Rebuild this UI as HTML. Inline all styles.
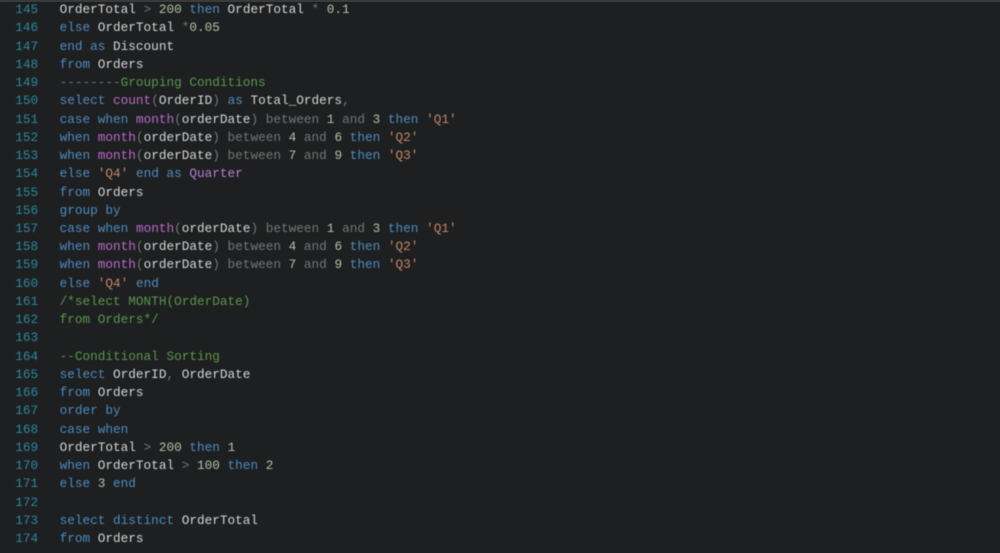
<!DOCTYPE html>
<html><head><meta charset="utf-8"><style>
html,body{margin:0;padding:0;background:#1e1f20;width:1000px;height:553px;overflow:hidden}
#w{position:relative;width:1000px;height:553px}
#top{position:absolute;left:0;top:0;width:1000px;height:2px;background:#3a3a3a}
#t{position:absolute;left:0;top:0;width:1000px;height:553px;filter:blur(.42px)}
pre{position:absolute;margin:0;font:12.72px/18.24px "Liberation Mono",monospace;white-space:pre;top:1.2px}
#n{left:15.2px;color:#2c8a9e}
#c{left:59.6px;color:#d6d6d6}
.k{color:#4e8cc2}.g{color:#767676}.f{color:#bc6ace}.s{color:#c4886c}.d{color:#b2c3a6}.c{color:#5a984e}.v{color:#ba7ed6}
</style></head><body><div id="w"><div id="top"></div><div id="t">
<pre id="n">145
146
147
148
149
150
151
152
153
154
155
156
157
158
159
160
161
162
163
164
165
166
167
168
169
170
171
172
173
174</pre>
<pre id="c">OrderTotal <span class="g">&gt;</span> <span class="d">200</span> <span class="k">then</span> OrderTotal <span class="g">*</span> <span class="d">0.1</span>
<span class="k">else</span> OrderTotal <span class="g">*</span><span class="d">0.05</span>
<span class="k">end as</span> Discount
<span class="k">from</span> Orders
<span class="g">--------</span><span class="c">Grouping Conditions</span>
<span class="k">select</span> <span class="f">count</span><span class="g">(</span>OrderID<span class="g">)</span> <span class="k">as</span> Total_Orders<span class="g">,</span>
<span class="k">case when</span> <span class="f">month</span><span class="g">(</span>orderDate<span class="g">) between</span> <span class="d">1</span> <span class="g">and</span> <span class="d">3</span> <span class="k">then</span> <span class="s">'Q1'</span>
<span class="k">when</span> <span class="f">month</span><span class="g">(</span>orderDate<span class="g">) between</span> <span class="d">4</span> <span class="g">and</span> <span class="d">6</span> <span class="k">then</span> <span class="s">'Q2'</span>
<span class="k">when</span> <span class="f">month</span><span class="g">(</span>orderDate<span class="g">) between</span> <span class="d">7</span> <span class="g">and</span> <span class="d">9</span> <span class="k">then</span> <span class="s">'Q3'</span>
<span class="k">else</span> <span class="s">'Q4'</span> <span class="k">end as</span> <span class="v">Quarter</span>
<span class="k">from</span> Orders
<span class="k">group by</span>
<span class="k">case when</span> <span class="f">month</span><span class="g">(</span>orderDate<span class="g">) between</span> <span class="d">1</span> <span class="g">and</span> <span class="d">3</span> <span class="k">then</span> <span class="s">'Q1'</span>
<span class="k">when</span> <span class="f">month</span><span class="g">(</span>orderDate<span class="g">) between</span> <span class="d">4</span> <span class="g">and</span> <span class="d">6</span> <span class="k">then</span> <span class="s">'Q2'</span>
<span class="k">when</span> <span class="f">month</span><span class="g">(</span>orderDate<span class="g">) between</span> <span class="d">7</span> <span class="g">and</span> <span class="d">9</span> <span class="k">then</span> <span class="s">'Q3'</span>
<span class="k">else</span> <span class="s">'Q4'</span> <span class="k">end</span>
<span class="c">/*select MONTH(OrderDate)
from Orders*/</span>

<span class="c">--Conditional Sorting</span>
<span class="k">select</span> OrderID<span class="g">,</span> OrderDate
<span class="k">from</span> Orders
<span class="k">order by</span>
<span class="k">case when</span>
OrderTotal <span class="g">&gt;</span> <span class="d">200</span> <span class="k">then</span> <span class="d">1</span>
<span class="k">when</span> OrderTotal <span class="g">&gt;</span> <span class="d">100</span> <span class="k">then</span> <span class="d">2</span>
<span class="k">else</span> <span class="d">3</span> <span class="k">end</span>

<span class="k">select distinct</span> OrderTotal
<span class="k">from</span> Orders</pre>
</div></div></body></html>
